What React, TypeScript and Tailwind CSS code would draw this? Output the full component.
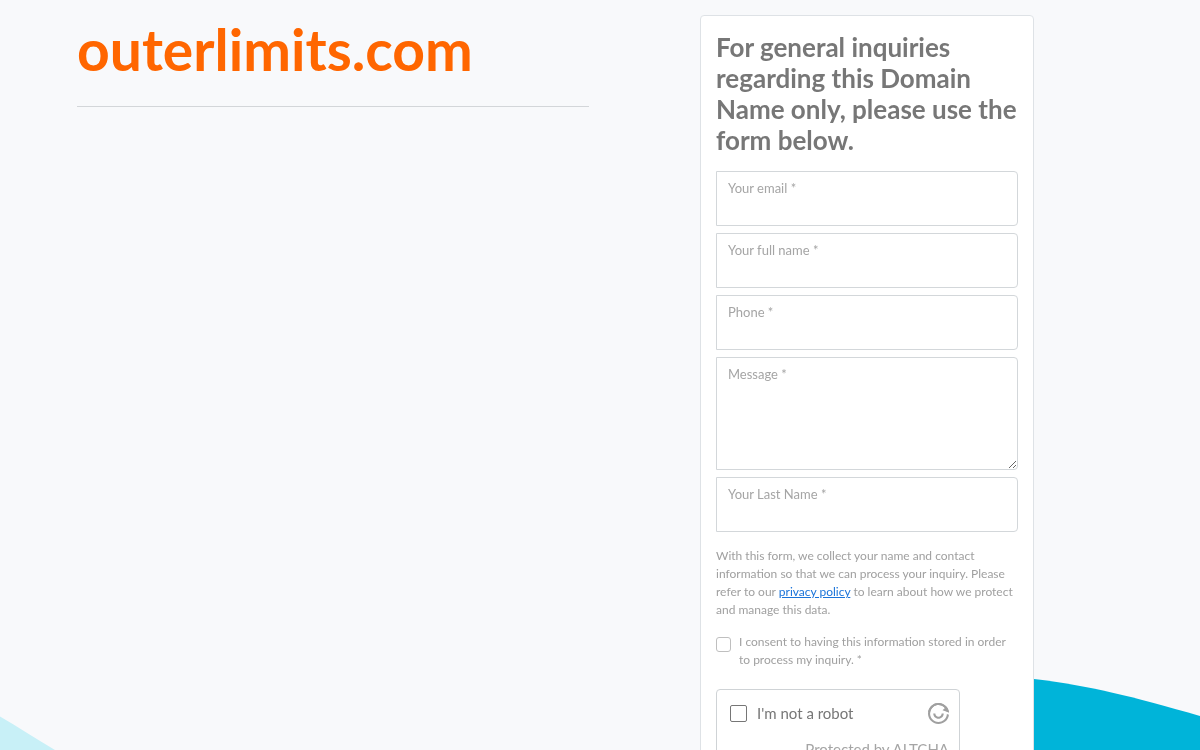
import React from "react";

type FieldProps = { id: string; label: string; type?: string; multiline?: boolean };

const fieldBox =
  "block w-full rounded-r border border-[#d3d7da] bg-white px-3 pt-6 pb-1 text-base text-[#777] outline-none focus:border-[#86b7fe]";

function Field({ id, label, type = "text", multiline = false }: FieldProps) {
  return (
    <div className="relative">
      {multiline ? (
        <textarea id={id} required className={`${fieldBox} h-[113px] resize-y`} />
      ) : (
        <input id={id} type={type} required className={`${fieldBox} h-[55px]`} />
      )}
      <label
        htmlFor={id}
        className="pointer-events-none absolute top-[7px] left-3 text-[13px] leading-5 text-[#a5a5a5]"
      >
        {label} *
      </label>
    </div>
  );
}

function AltchaLogo() {
  return (
    <svg viewBox="0 0 20 20" className="size-[21px] fill-current" aria-hidden="true">
      <path d="M2.33955 16.4279C5.88954 20.6586 12.1971 21.2105 16.4279 17.6604C18.4699 15.947 19.6548 13.5911 19.9352 11.1365L17.9886 10.4279C17.8738 12.5624 16.909 14.6459 15.1423 16.1284C11.7577 18.9684 6.71167 18.5269 3.87164 15.1423C1.03163 11.7577 1.4731 6.71166 4.8577 3.87164C8.24231 1.03162 13.2883 1.4731 16.1284 4.8577C16.9767 5.86872 17.5322 7.02798 17.804 8.2324L19.9522 9.01429C19.7622 7.07737 19.0059 5.17558 17.6604 3.57212C14.1104 -0.658624 7.80283 -1.21043 3.57212 2.33956C-0.658625 5.88958 -1.21046 12.1971 2.33955 16.4279Z" />
      <path d="M3.57212 2.33956C1.65755 3.94607 0.496389 6.11731 0.12782 8.40523L2.04639 9.13961C2.26047 7.15832 3.21057 5.25375 4.8577 3.87164C8.24231 1.03162 13.2883 1.4731 16.1284 4.8577L13.8302 6.78606L19.9633 9.13364C19.7929 7.15555 19.0335 5.20847 17.6604 3.57212C14.1104 -0.658624 7.80283 -1.21043 3.57212 2.33956Z" />
      <path d="M7 10H5C5 12.7614 7.23858 15 10 15C12.7614 15 15 12.7614 15 10H13C13 11.6569 11.6569 13 10 13C8.3431 13 7 11.6569 7 10Z" />
    </svg>
  );
}

function Waves() {
  return (
    <svg
      viewBox="0 0 1200 100"
      preserveAspectRatio="none"
      className="fixed inset-x-0 bottom-0 h-[100px] w-full"
      aria-hidden="true"
    >
      <path d="M0 66.5C18 77 36 89 55 100H0Z" fill="#c8f0f7" />
      <path d="M900 24C950 22 990 24 1034 29C1092 36 1130 46 1200 66V100H900Z" fill="#00b4d9" />
    </svg>
  );
}

export default function App() {
  return (
    <div className="min-h-screen bg-[#f8f9fb] font-['Lato',sans-serif] text-[#777]">
      <Waves />
      <main className="relative mx-auto grid w-[89%] max-w-[1068px] grid-cols-2 py-[15px]">
        <section className="px-[11px]">
          <h1 className="border-b border-[#d3d6d9] pb-[23px] text-[57px] leading-[68px] font-bold text-[#ff6600]">
            outerlimits.com
          </h1>
        </section>

        <section className="flex justify-center">
          <form
            className="w-full max-w-[334px] rounded border border-[#dee2e6] bg-white px-[15px] py-4"
            onSubmit={(e: React.FormEvent) => e.preventDefault()}
          >
            <h2 className="mb-[15px] text-[26px] leading-[31px] font-bold">
              For general inquiries regarding this Domain Name only, please use the form below.
            </h2>

            <div className="flex flex-col gap-[7px]">
              <Field id="email" label="Your email" type="email" />
              <Field id="full-name" label="Your full name" />
              <Field id="phone" label="Phone" type="tel" />
              <Field id="message" label="Message" multiline />
              <Field id="last-name" label="Your Last Name" />
            </div>

            <p className="mt-[15px] text-xs leading-[18px] text-[#a0a0a0]">
              With this form, we collect your name and contact information so that we can process your
              inquiry. Please refer to our{" "}
              <a href="#privacy" className="text-[#1a73d9] underline">
                privacy policy
              </a>{" "}
              to learn about how we protect and manage this data.
            </p>

            <div className="mt-[14px] flex gap-2">
              <input
                id="consent"
                type="checkbox"
                required
                className="mt-1 size-[15px] shrink-0 appearance-none rounded-[3px] border border-[#bfbfbf] bg-white checked:bg-[#1a73d9]"
              />
              <label htmlFor="consent" className="pr-2 text-xs leading-[18px] text-[#a0a0a0]">
                I consent to having this information stored in order to process my inquiry. *
              </label>
            </div>

            <div className="mt-5 w-[244px] rounded border border-[#cfd3d6] px-[10px] py-3">
              <div className="flex items-center">
                <input
                  id="robot"
                  type="checkbox"
                  className="ml-[3px] size-[17px] appearance-none rounded-[2px] border border-[#767676] bg-white checked:bg-[#1a73d9]"
                />
                <label htmlFor="robot" className="ml-[10px] grow text-[15px] leading-[22px]">
                  I'm not a robot
                </label>
                <span className="text-[#a0a0a0]">
                  <AltchaLogo />
                </span>
              </div>
              <p className="mt-[14px] text-right text-[15px] leading-[22px] text-[#a5a5a5]">
                Protected by <a href="#altcha">ALTCHA</a>
              </p>
            </div>
          </form>
        </section>
      </main>
    </div>
  );
}
